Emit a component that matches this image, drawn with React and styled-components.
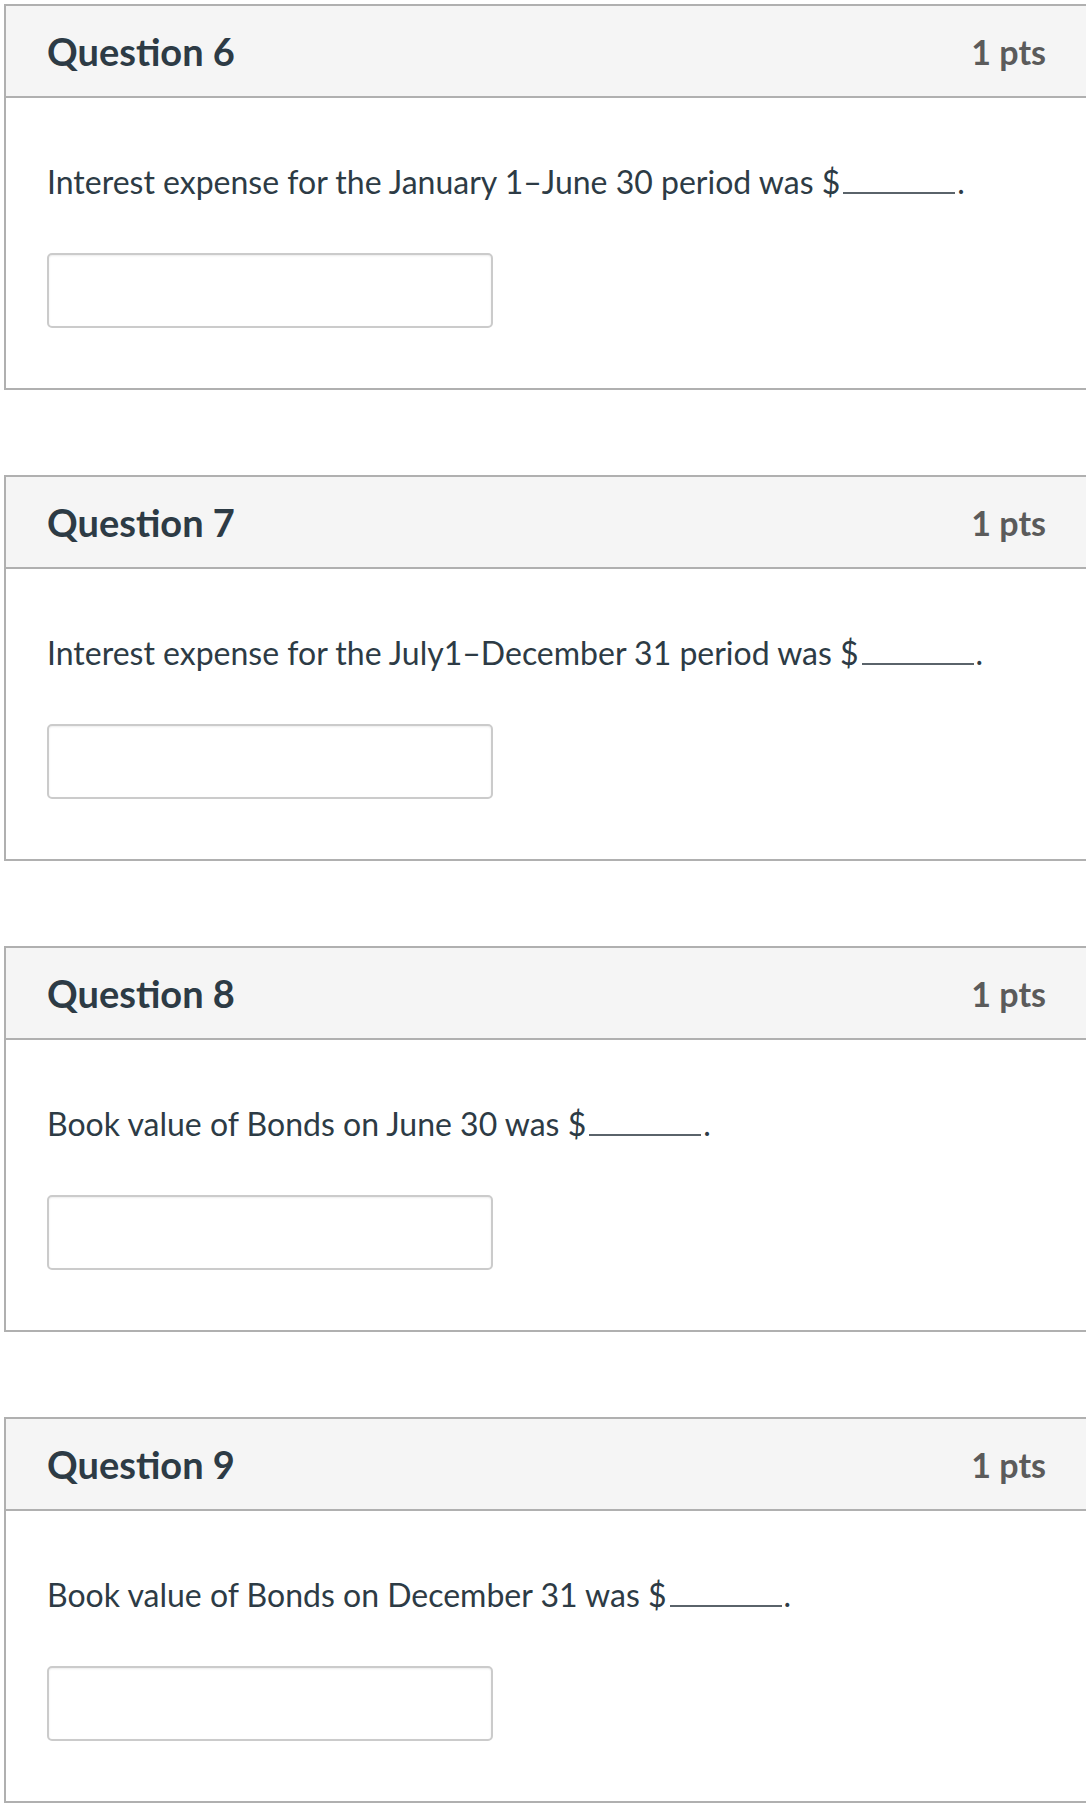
import styled, { createGlobalStyle } from "styled-components";

const GlobalStyle = createGlobalStyle`
  html, body {
    margin: 0;
    padding: 0;
    background: #fff;
    overflow-x: hidden;
  }
  body {
    font-family: Lato, "Open Sans", "Liberation Sans", sans-serif;
    color: #2d3b45;
  }
`;

const questions = [
  { num: 6, text: "Interest expense for the January 1–June 30 period was $" },
  { num: 7, text: "Interest expense for the July1–December 31 period was $" },
  { num: 8, text: "Book value of Bonds on June 30 was $" },
  { num: 9, text: "Book value of Bonds on December 31 was $" },
];

const Page = styled.div`
  display: flex;
  flex-direction: column;
  gap: 85px;
  padding: 4px 0 4px 4px;
`;

const Card = styled.div`
  width: 1100px;
  border: 2px solid #b0b0b0;
  background: #fff;
`;

const Header = styled.div`
  height: 90px;
  display: flex;
  align-items: center;
  justify-content: space-between;
  padding: 0 60px 0 41px;
  background: #f5f5f5;
  border-bottom: 2px solid #b0b0b0;
`;

const Title = styled.h2`
  margin: 0;
  font-size: 38px;
  font-weight: 700;
  color: #2d3b45;
`;

const Points = styled.div`
  font-size: 34px;
  font-weight: 700;
  color: #5b5b5b;
`;

const Body = styled.div`
  padding: 62px 41px 60px;
`;

const Prompt = styled.p`
  margin: 0 0 50px;
  font-size: 32px;
  line-height: 43px;
  color: #2d3b45;
`;

const Blank = styled.span`
  display: inline-block;
  width: 112px;
  margin: 0 2px 0 3px;
  border-bottom: 2px solid #5a636a;
`;

const AnswerInput = styled.input`
  display: block;
  box-sizing: border-box;
  width: 446px;
  height: 75px;
  margin: 0;
  border: 2px solid #cbcbcb;
  border-radius: 5px;
  box-shadow: inset 0 1px 2px rgba(0, 0, 0, 0.08);
  background: #fff;
  font-family: inherit;
  font-size: 28px;
  padding: 0 12px;
  outline: none;
`;

export default function App() {
  return (
    <>
      <GlobalStyle />
      <Page>
        {questions.map((q) => (
          <Card key={q.num}>
            <Header>
              <Title>Question {q.num}</Title>
              <Points>1 pts</Points>
            </Header>
            <Body>
              <Prompt>
                {q.text}
                <Blank />.
              </Prompt>
              <AnswerInput type="text" aria-label={`Answer for question ${q.num}`} />
            </Body>
          </Card>
        ))}
      </Page>
    </>
  );
}
